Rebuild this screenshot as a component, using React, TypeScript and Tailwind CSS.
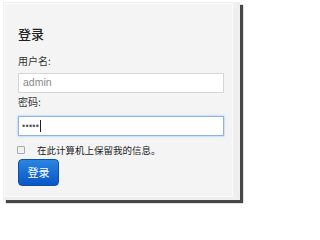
import React from "react";

const cjk = { fontFamily: '"Noto Sans CJK SC", "Noto Sans", sans-serif' };
const latin = { fontFamily: '"Liberation Sans", Arial, sans-serif' };

export default function App() {
  return (
    <div className="w-[244px] h-[206px] bg-white pt-[2px] pl-[3px] overflow-hidden">
      <div className="w-[237px] h-[198px] bg-[#efefef] shadow-[3px_3px_1px_rgba(0,0,0,0.72)] pt-px pl-px">
        <div
          className="w-[229px] h-[194px] bg-[#f4f4f4] border border-[#fbfbfb] pl-[13px] pt-[22px] flex flex-col"
          style={cjk}
        >
          <div className="text-[13px] leading-[16px] font-medium text-[#222]">登录</div>
          <div className="mt-[13px] text-[10px] leading-[12px] text-[#333]">用户名:</div>
          <div className="mt-[6px] w-[206px] h-[20px] bg-white border border-[#d6d6d6] flex items-center pl-[4px]">
            <span className="text-[10.5px] text-[#8a8a8a]" style={latin}>admin</span>
          </div>
          <div className="mt-[3px] text-[10px] leading-[12px] text-[#333]">密码:</div>
          <div className="mt-[8px] w-[206px] h-[20px] bg-white border border-[#86b5e6] shadow-[0_0_2px_rgba(80,150,230,0.6)] flex items-center pl-[3px]">
            <span className="text-[9px] leading-[12px] tracking-[0.3px] text-[#555]" style={latin}>•••••</span>
            <span className="ml-[1px] w-px h-[12px] bg-[#222]" />
          </div>
          <div className="mt-[8px] flex items-center h-[12px]">
            <span className="ml-[-1px] w-[8px] h-[8px] border border-[#a9a9a9] bg-[#f0f0f0] rounded-[1px]" />
            <span className="ml-[12px] text-[9.5px] leading-[12px] text-[#222]">在此计算机上保留我的信息。</span>
          </div>
          <div className="mt-[3px] w-[41px] h-[27px] rounded-[4px] bg-gradient-to-b from-[#2b86e0] to-[#0a55c6] border border-[#0b4fb0] flex items-center justify-center">
            <span className="text-[11px] text-white">登录</span>
          </div>
        </div>
      </div>
    </div>
  );
}
